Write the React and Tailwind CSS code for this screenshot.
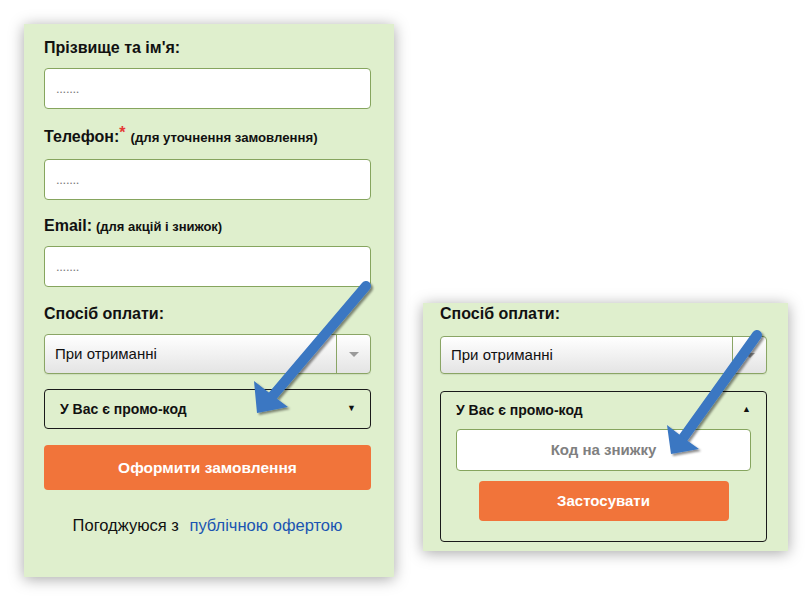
import React from "react";

const font = { fontFamily: '"Liberation Sans", Arial, sans-serif' };

function TextInput() {
  return (
    <div className="h-[41px] w-full rounded-[4px] border border-[#86a55e] bg-white flex items-center pl-[11px]">
      <span className="text-[13px] text-[#7a7a7a] tracking-[-0.3px] leading-none">.......</span>
    </div>
  );
}

function Select({ h = "h-[40px]" }) {
  return (
    <div className={`${h} w-full rounded-[4px] border border-[#8aa565] bg-gradient-to-b from-white to-[#e4e4e4] flex items-stretch shadow-[0_1px_1px_rgba(0,0,0,0.08)]`}>
      <div className="flex-1 flex items-center pl-[10px] text-[15px] text-[#111]">При отриманні</div>
      <div className="w-[34px] border-l border-[#8aa565] flex items-center justify-center">
        <div className="w-0 h-0 border-l-[5px] border-r-[5px] border-t-[5px] border-l-transparent border-r-transparent border-t-[#9a9a9a]" />
      </div>
    </div>
  );
}

function Arrows() {
  return (
    <svg className="absolute left-0 top-0 pointer-events-none" width="810" height="600" viewBox="0 0 810 600">
      <defs>
        <filter id="sh" x="-20%" y="-20%" width="140%" height="140%">
          <feDropShadow dx="2" dy="2" stdDeviation="1" floodColor="#000" floodOpacity="0.45" />
        </filter>
      </defs>
      <g filter="url(#sh)" fill="#3a77c2" stroke="none">
        <line x1="366" y1="286" x2="270" y2="399" stroke="#3a77c2" strokeWidth="10" strokeLinecap="round" />
        <polygon points="257,413 254,381 272,395 288,407" />
        <line x1="757" y1="335" x2="681" y2="441" stroke="#3a77c2" strokeWidth="10" strokeLinecap="round" />
        <polygon points="671,454 667,425 685,439 699,449" />
      </g>
    </svg>
  );
}

export default function App() {
  return (
    <div className="relative w-[810px] h-[600px] bg-white overflow-hidden" style={font}>
      <div className="flex items-start pt-[24px] pl-[24px] gap-[29px]">
        {/* Panel 1 */}
        <div className="w-[370px] h-[553px] bg-[#dfefcd] shadow-[0_2px_14px_rgba(0,0,0,0.35)] pl-[20px] pr-[23px] pt-[14px] flex flex-col">
          <div className="h-[20px] leading-[20px] text-[16px] font-bold text-[#111]">Прізвище та ім'я:</div>
          <div className="mt-[10px]"><TextInput /></div>

          <div className="mt-[18px] h-[20px] leading-[20px] text-[#111] font-bold flex items-baseline">
            <span className="text-[16px]">Телефон:</span>
            <span className="text-[#e53935] text-[16px] relative top-[-4px]">*</span>
            <span className="text-[13.2px] ml-[5px]">(для уточнення замовлення)</span>
          </div>
          <div className="mt-[12px]"><TextInput /></div>

          <div className="mt-[16px] h-[20px] leading-[20px] text-[#111] font-bold flex items-baseline">
            <span className="text-[16px]">Email:</span>
            <span className="text-[13px] ml-[4px]">(для акцій і знижок)</span>
          </div>
          <div className="mt-[10px]"><TextInput /></div>

          <div className="mt-[17px] h-[20px] leading-[20px] text-[16px] font-bold text-[#111]">Спосіб оплати:</div>
          <div className="mt-[10px]"><Select /></div>

          <div className="mt-[15px] h-[40px] rounded-[4px] border border-[#1a1a1a] flex items-center justify-between pl-[15px] pr-[14px]">
            <span className="text-[14px] font-bold text-[#111]">У Вас є промо-код</span>
            <span className="text-[9px] text-[#111]">▼</span>
          </div>

          <div className="mt-[16px] h-[45px] rounded-[4px] bg-[#f1743a] flex items-center justify-center text-white text-[15.5px] font-bold">
            Оформити замовлення
          </div>

          <div className="mt-[25px] text-center text-[16.5px] text-[#111] leading-[20px]">
            Погоджуюся з <span className="ml-[6px] text-[#1b55b2]">публічною офертою</span>
          </div>
        </div>

        {/* Panel 2 */}
        <div className="mt-[279px] w-[365px] h-[248px] bg-[#dfefcd] shadow-[0_2px_14px_rgba(0,0,0,0.35)] pl-[17px] pr-[21px] pt-[1px] flex flex-col">
          <div className="h-[20px] leading-[20px] text-[16px] font-bold text-[#111]">Спосіб оплати:</div>
          <div className="mt-[12px]"><Select h="h-[38px]" /></div>

          <div className="mt-[17px] h-[151px] rounded-[4px] border border-[#1a1a1a] flex flex-col px-[15px]">
            <div className="mt-[8px] h-[20px] flex items-center justify-between">
              <span className="text-[14px] font-bold text-[#111]">У Вас є промо-код</span>
              <span className="text-[9px] text-[#111]">▲</span>
            </div>
            <div className="mt-[9px] h-[42px] rounded-[4px] border border-[#86a55e] bg-white flex items-center justify-center text-[15px] font-bold text-[#808080]">
              Код на знижку
            </div>
            <div className="mt-[10px] self-center w-[250px] h-[40px] rounded-[4px] bg-[#f1743a] flex items-center justify-center text-white text-[15px] font-bold">
              Застосувати
            </div>
          </div>
        </div>
      </div>
      <Arrows />
    </div>
  );
}
